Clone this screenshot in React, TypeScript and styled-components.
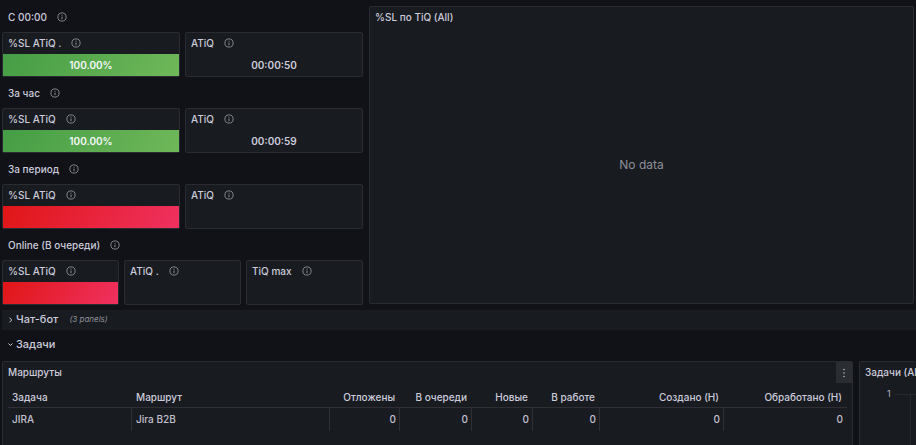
import React from "react";
import styled, { createGlobalStyle } from "styled-components";

const GlobalStyle = createGlobalStyle`
  *, *::before, *::after { box-sizing: border-box; }
  body {
    margin: 0;
    background: #111217;
    color: #ccccdc;
    font-family: Inter, "Noto Sans", sans-serif;
    font-size: 10px;
    line-height: 16px;
  }
`;

const Page = styled.main`
  display: flex;
  flex-direction: column;
  height: 100vh;
  overflow: hidden;
  padding: 1px 0 0 2px;
`;

const Overview = styled.div`
  display: grid;
  grid-template-columns: minmax(0, 361fr) minmax(0, 545fr);
  gap: 6px;
  padding-right: 2px;
`;

const Metrics = styled.div`
  display: flex;
  flex-direction: column;
`;

const GroupHeader = styled.header`
  display: flex;
  align-items: center;
  gap: 10px;
  height: 31px;
  padding: 0 6px;
`;

const Title = styled.h2`
  margin: 0;
  font-size: 10px;
  font-weight: 500;
  line-height: 16px;
  white-space: nowrap;
`;

const PanelRow = styled.div<{ $columns: number }>`
  display: grid;
  grid-template-columns: repeat(${(p) => p.$columns}, minmax(0, 1fr));
  gap: 5px;
`;

const Panel = styled.section`
  display: flex;
  flex-direction: column;
  min-width: 0;
  background: #181b1f;
  border: 1px solid #2a2c31;
  border-radius: 2px;
`;

const StatPanel = styled(Panel)`
  height: 45px;
`;

const PanelHeader = styled.header`
  display: flex;
  align-items: center;
  flex-shrink: 0;
  gap: 10px;
  height: 21px;
  padding: 0 5px 2px;
`;

const fills = {
  none: "transparent",
  green: "linear-gradient(120deg, #459d45, #6fb859)",
  red: "linear-gradient(120deg, #e01616, #f03160)",
};

const StatValue = styled.div<{ $fill: keyof typeof fills }>`
  display: flex;
  flex: 1;
  align-items: center;
  justify-content: center;
  background: ${(p) => fills[p.$fill]};
  color: ${(p) => (p.$fill === "none" ? "#ccccdc" : "#f7f8fa")};
  font-size: 10px;
  font-weight: 600;
`;

const InfoButton = styled.button`
  display: flex;
  padding: 0;
  border: 0;
  background: none;
  color: #8e8f9a;
  margin-top: 1px;
`;

const ChartPanel = styled(Panel)`
  margin: 5px 0 1px;
`;

const NoData = styled.p`
  display: flex;
  flex: 1;
  align-items: center;
  justify-content: center;
  margin: 0;
  padding-bottom: 1px;
  color: #8e8f9a;
  font-size: 12px;
`;

const RowToggle = styled.button<{ $collapsed?: boolean }>`
  display: flex;
  align-items: center;
  flex-shrink: 0;
  width: 100%;
  height: 20px;
  margin-top: ${(p) => (p.$collapsed ? 5 : 4)}px;
  padding: ${(p) => (p.$collapsed ? "0 6px 3px" : "0 6px")};
  border: 0;
  background: ${(p) => (p.$collapsed ? "#181b1f" : "transparent")};
  color: #ccccdc;
  font: 500 11px/16px Inter, "Noto Sans", sans-serif;
  text-align: left;
`;

const RowNote = styled.em`
  margin-left: 11px;
  color: #8e8f9a;
  font-size: 8px;
  font-weight: 400;
`;

const Tasks = styled.div`
  display: grid;
  grid-template-columns: minmax(0, 1fr) 57px;
  gap: 6px;
  flex: 1;
  min-height: 0;
  margin-top: 7px;
`;

const OpenPanel = styled(Panel)<{ $cut?: boolean }>`
  border-bottom: 0;
  border-right-width: ${(p) => (p.$cut ? 0 : 1)}px;
  border-radius: 2px 2px 0 0;
  overflow: hidden;
`;

const TaskHeader = styled(PanelHeader)`
  justify-content: space-between;
  padding: 0 0 0 5px;
`;

const TaskTitle = styled(Title)`
  padding-bottom: 2px;
`;

const MenuButton = styled.button`
  display: flex;
  align-items: center;
  justify-content: center;
  flex-shrink: 0;
  width: 16px;
  height: 21px;
  padding: 0;
  border: 0;
  border-radius: 1px;
  background: #2a2d32;
  color: #b4b5c2;
`;

const TaskTable = styled.table`
  width: calc(100% - 10px);
  margin: 3px 5px 0;
  border-collapse: separate;
  border-spacing: 0;
  table-layout: fixed;
`;

const HeadCell = styled.th<{ $numeric: boolean }>`
  height: 22px;
  padding: 0 5px 0 4px;
  border-bottom: 1px solid #2e3036;
  font-weight: 500;
  text-align: ${(p) => (p.$numeric ? "right" : "left")};
  white-space: nowrap;
`;

const Cell = styled.td<{ $numeric: boolean }>`
  height: 23px;
  padding: 0 3px 2px 4px;
  border-right: 1px solid #2e3036;
  font-weight: 500;
  color: #c0c0d0;
  text-align: ${(p) => (p.$numeric ? "right" : "left")};
  &:last-child { border-right-color: transparent; }
`;

const Plot = styled.div`
  display: flex;
  padding-left: 27px;
  color: #b4b5c2;
  font-size: 9px;
  margin-top: 3px;
`;

const PlotGrid = styled.svg`
  flex-shrink: 0;
  margin: 8px 0 0 4px;
`;

const Info = ({ label }: { label: string }) => (
  <InfoButton type="button" aria-label={`Описание: ${label}`}>
    <svg width="10" height="10" viewBox="0 0 10 10" fill="none" stroke="currentColor">
      <circle cx="5" cy="5" r="4.1" strokeWidth="0.9" />
      <path d="M5 4.6V7.2M5 2.7V3.7" strokeWidth="1" />
    </svg>
  </InfoButton>
);

const Chevron = ({ open }: { open: boolean }) => (
  <svg width="5" height="8" viewBox="0 0 5 8" fill="none" stroke="currentColor" strokeLinecap="round" strokeLinejoin="round">
    <path d={open ? "M0.8 3.8L2.5 5.5L4.2 3.8" : "M1.8 3L3.7 5L1.8 7"} />
  </svg>
);

type Stat = { title: string; value?: string; fill?: keyof typeof fills };

const groups: { title: string; stats: Stat[] }[] = [
  { title: "С 00:00", stats: [{ title: "%SL ATiQ .", value: "100.00%", fill: "green" }, { title: "ATiQ", value: "00:00:50" }] },
  { title: "За час", stats: [{ title: "%SL ATiQ", value: "100.00%", fill: "green" }, { title: "ATiQ", value: "00:00:59" }] },
  { title: "За период", stats: [{ title: "%SL ATiQ", fill: "red" }, { title: "ATiQ" }] },
  { title: "Online (В очереди)", stats: [{ title: "%SL ATiQ", fill: "red" }, { title: "ATiQ ." }, { title: "TiQ max" }] },
];

const columns = [
  { name: "Задача", width: 124, value: "JIRA" },
  { name: "Маршрут", width: 198, value: "Jira B2B" },
  { name: "Отложены", width: 70, value: 0 },
  { name: "В очереди", width: 72, value: 0 },
  { name: "Новые", width: 61, value: 0 },
  { name: "В работе", width: 67, value: 0 },
  { name: "Создано (Н)", width: 124, value: 0 },
  { name: "Обработано (Н)", width: 123, value: 0 },
];

const Col = styled.col<{ $share: number }>`
  width: ${(p) => p.$share}px;
`;

export default function App() {
  return (
    <Page>
      <GlobalStyle />
      <Overview>
        <Metrics>
          {groups.map((group) => (
            <React.Fragment key={group.title}>
              <GroupHeader>
                <Title>{group.title}</Title>
                <Info label={group.title} />
              </GroupHeader>
              <PanelRow $columns={group.stats.length}>
                {group.stats.map((stat) => (
                  <StatPanel key={stat.title}>
                    <PanelHeader>
                      <Title>{stat.title}</Title>
                      <Info label={stat.title} />
                    </PanelHeader>
                    <StatValue $fill={stat.fill ?? "none"}>{stat.value}</StatValue>
                  </StatPanel>
                ))}
              </PanelRow>
            </React.Fragment>
          ))}
        </Metrics>
        <ChartPanel>
          <PanelHeader>
            <Title>%SL по TiQ (All)</Title>
          </PanelHeader>
          <NoData>No data</NoData>
        </ChartPanel>
      </Overview>
      <RowToggle type="button" aria-expanded={false} $collapsed>
        <Chevron open={false} />
        <span>&nbsp;Чат-бот</span>
        <RowNote>(3 panels)</RowNote>
      </RowToggle>
      <RowToggle type="button" aria-expanded>
        <Chevron open />
        <span>&nbsp;Задачи</span>
      </RowToggle>
      <Tasks>
        <OpenPanel>
          <TaskHeader>
            <TaskTitle>Маршруты</TaskTitle>
            <MenuButton type="button" aria-label="Меню">
              <svg width="4" height="10" viewBox="0 0 4 10" fill="currentColor">
                <circle cx="2" cy="1.5" r="0.8" />
                <circle cx="2" cy="5" r="0.8" />
                <circle cx="2" cy="8.5" r="0.8" />
              </svg>
            </MenuButton>
          </TaskHeader>
          <TaskTable>
            <colgroup>
              {columns.map((c) => <Col key={c.name} $share={c.width} />)}
            </colgroup>
            <thead>
              <tr>
                {columns.map((c) => (
                  <HeadCell key={c.name} scope="col" $numeric={c.value === 0}>{c.name}</HeadCell>
                ))}
              </tr>
            </thead>
            <tbody>
              <tr>
                {columns.map((c) => (
                  <Cell key={c.name} $numeric={c.value === 0}>{c.value}</Cell>
                ))}
              </tr>
            </tbody>
          </TaskTable>
        </OpenPanel>
        <OpenPanel $cut>
          <PanelHeader>
            <Title>Задачи (All)</Title>
          </PanelHeader>
          <Plot>
            <span>1</span>
            <PlotGrid width="40" height="80" viewBox="0 0 40 80" fill="none" stroke="#25282d">
              <path d="M0 0.5H40M15.5 0V80" />
            </PlotGrid>
          </Plot>
        </OpenPanel>
      </Tasks>
    </Page>
  );
}
